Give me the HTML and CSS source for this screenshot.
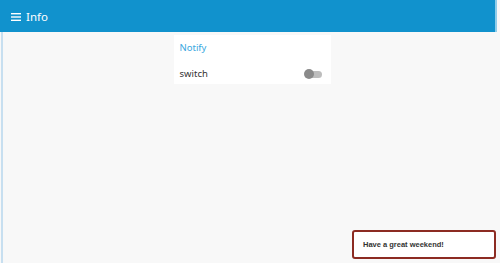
FILE: index.html
```html
<!DOCTYPE html>
<html>
<head>
<meta charset="utf-8">
<link rel="stylesheet" href="styles.css">
</head>
<body>
<div class="app">
  <header class="topbar">
    <svg class="menu" width="10" height="8" viewBox="0 0 10 8"><rect x="0" y="0" width="10" height="1.4" fill="#fff"/><rect x="0" y="3.3" width="10" height="1.4" fill="#fff"/><rect x="0" y="6.6" width="10" height="1.4" fill="#fff"/></svg>
    <span class="title">Info</span>
  </header>
  <main class="content">
    <section class="card">
      <div class="card-title">Notify</div>
      <div class="row">
        <span class="label">switch</span>
        <span class="switch"><span class="track"></span><span class="thumb"></span></span>
      </div>
    </section>
  </main>
  <div class="toast">Have a great weekend!</div>
</div>
</body>
</html>
```
FILE: styles.css
```css
html, body { margin: 0; padding: 0; }
body {
  width: 500px; height: 263px; overflow: hidden;
  font-family: "Noto Sans", "Open Sans", sans-serif;
  background: #f8f8f8;
}
.app { position: relative; height: 263px; display: flex; flex-direction: column; }
.topbar {
  height: 32px; flex: none; width: 497px;
  background: #1192cd;
  border-right: 2px solid #8fcdea;
  display: flex; align-items: center;
  padding-left: 11px; box-sizing: border-box;
  color: #fff;
}
.menu { margin-right: 5px; margin-top: 1px; }
.title { font-size: 11.5px; line-height: 1; margin-top: 1px; }
.content {
  flex: 1;
  border-left: 2px solid #c7dff0;
  margin-left: 1px;
  display: flex; justify-content: center; align-items: flex-start;
  padding-top: 3px;
}
.card {
  width: 157px; height: 49px; background: #fff;
  margin-left: 1px;
  box-sizing: border-box; padding: 6px 8px 0 6px;
}
.card-title { color: #3aa8e0; font-size: 9.5px; line-height: 13px; height: 13px; }
.row {
  margin-top: 13px;
  display: flex; justify-content: space-between; align-items: center;
  height: 13px;
}
.label { color: #333; font-size: 9.5px; }
.switch { position: relative; width: 19px; height: 10px; display: block; }
.track {
  position: absolute; left: 2px; top: 2px; width: 16px; height: 7px;
  background: #bdbdbd; border-radius: 4px;
}
.thumb {
  position: absolute; left: 0; top: 0; width: 10px; height: 10px;
  background: #8a8a8a; border-radius: 50%;
}
.toast {
  position: absolute; left: 352px; top: 230px;
  width: 144px; height: 29px; box-sizing: border-box;
  background: #fff; border: 2px solid #8c2b22; border-radius: 3px;
  font-family: "Liberation Sans", Arial, sans-serif;
  font-size: 7.5px; font-weight: bold; color: #333;
  display: flex; align-items: center; padding-left: 9px;
}
```
